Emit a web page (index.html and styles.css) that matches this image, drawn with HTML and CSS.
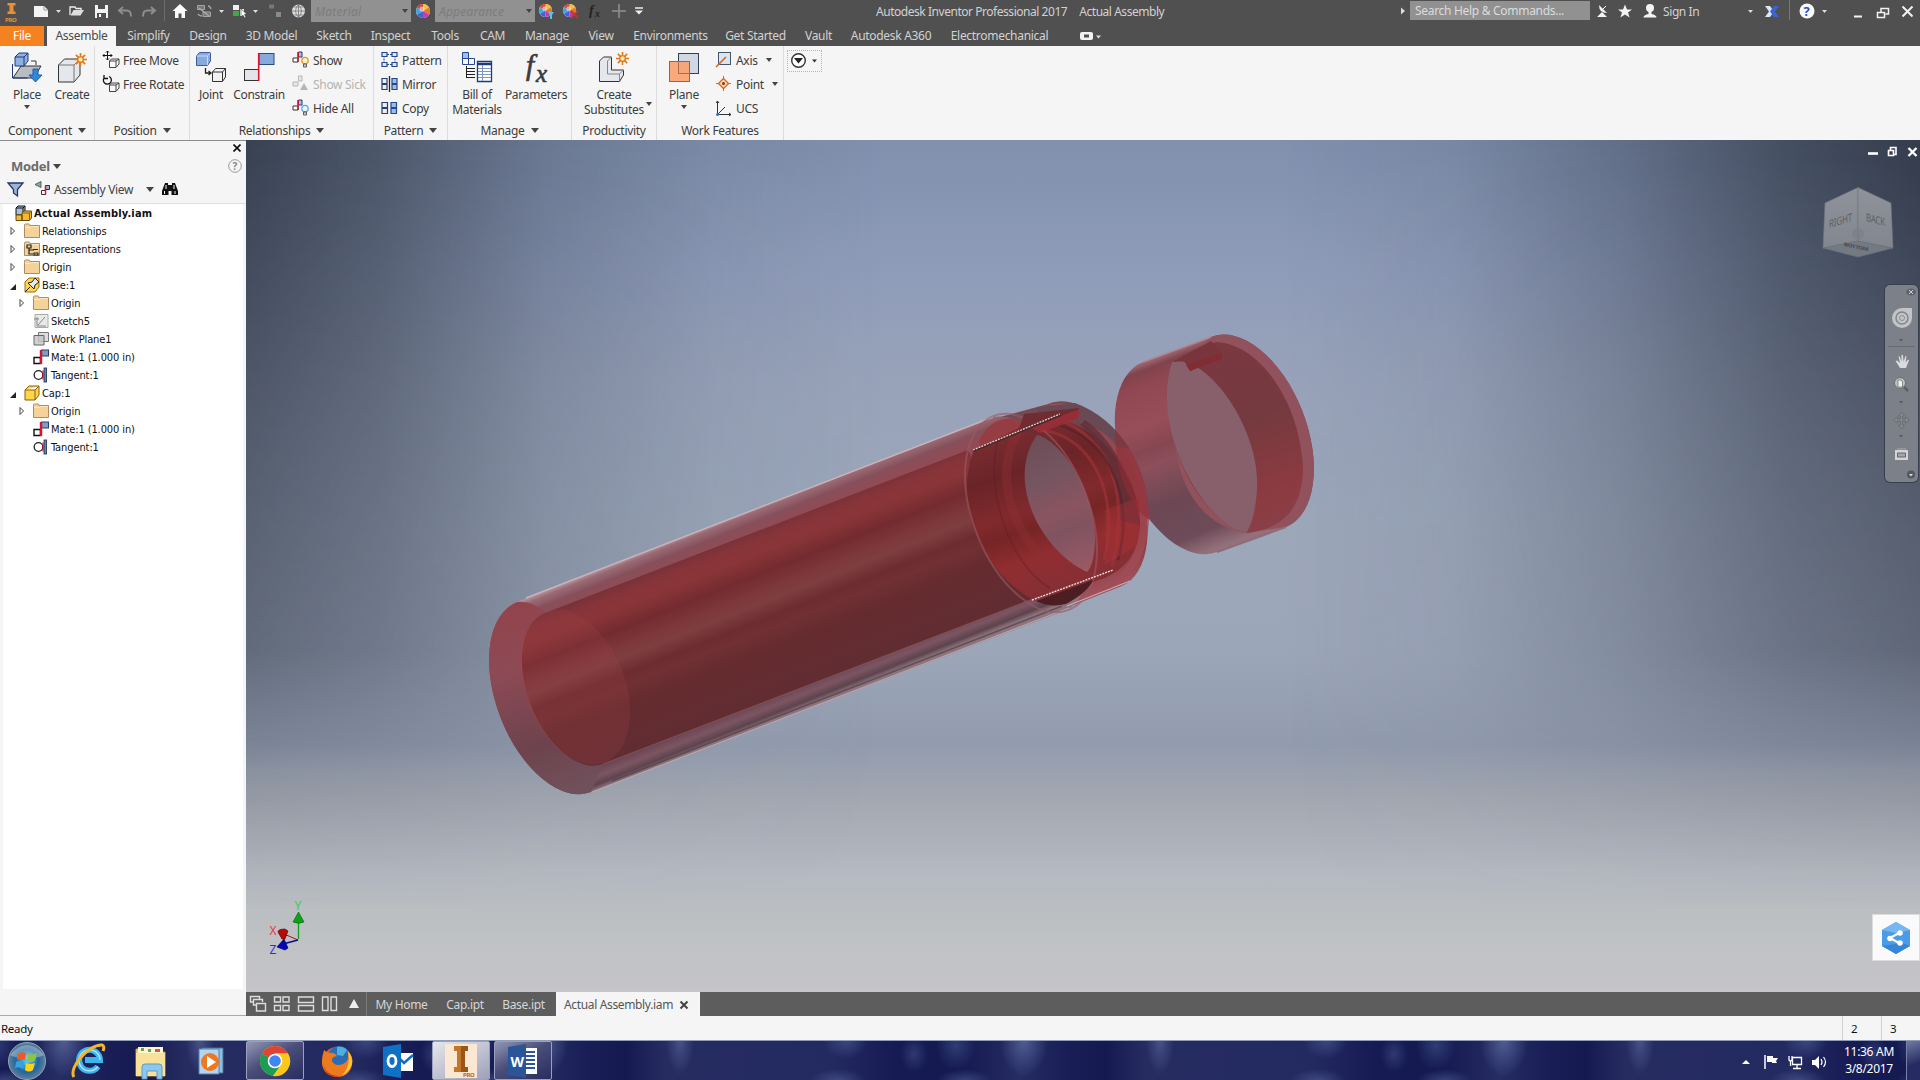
FILE: index.html
```html
<!DOCTYPE html>
<html lang="en">
<head>
    <meta charset="UTF-8">
    <title>Autodesk Inventor Professional 2017</title>
    <link rel="stylesheet" href="styles.css">
</head>
<body>

    <!-- shared icons -->
    <svg class="sprite" width="0" height="0">
        <symbol id="wheel" viewBox="0 0 16 16">
            <circle cx="8" cy="8" r="7" fill="#eee"/>
            <path d="M8 8V1a7 7 0 0 1 6 3.5z" fill="#f1c232"/><path d="M8 8l6-3.5a7 7 0 0 1 0 7z" fill="#e8772e"/>
            <path d="M8 8l6 3.500A7 7 0 0 1 8 15z" fill="#c63bb0"/><path d="M8 8v7a7 7 0 0 1-6-3.500z" fill="#4a5fd6"/>
            <path d="M8 8l-6 3.500a7 7 0 0 1 0-7z" fill="#39a9dc"/><path d="M8 8L2 4.500A7 7 0 0 1 8 1z" fill="#d9443a"/>
            <circle cx="7" cy="6" r="2.500" fill="#fff" opacity=".5"/>
        </symbol>
        <symbol id="folder" viewBox="0 0 16 16">
            <path d="M.5 3.500V2q0-1 1-1H5q1 0 1 1.500h9.500v12H.5z" fill="#f5d29a" stroke="#a98d66"/>
            <path d="M1 4.500h5.500l1-1H15" fill="none" stroke="#fbe8bd"/>
        </symbol>
        <symbol id="mate" viewBox="0 0 16 16">
            <rect x="8.500" y="1" width="7" height="6" fill="#7e9cc6" stroke="#27406b"/>
            <path d="M1 8.500h6.500v6H1z" fill="#fff" stroke="#111" stroke-width="1.400"/>
            <path d="M8 1v14" stroke="#d8132b" stroke-width="2.400"/>
        </symbol>
        <symbol id="tangent" viewBox="0 0 16 16">
            <circle cx="5.500" cy="8" r="4.300" fill="#fff" stroke="#222" stroke-width="1.300"/>
            <rect x="11" y="1" width="2.600" height="14" fill="#5d86b8" stroke="#1d2f4d" stroke-width=".8"/>
            <path d="M10 3.500v9" stroke="#d8132b" stroke-width="1.200"/>
        </symbol>
        <symbol id="closed" viewBox="0 0 6 10"><path d="M1 1.500L4.500 5 1 8.500z" fill="#fff" stroke="#444"/></symbol>
        <symbol id="open" viewBox="0 0 6 10"><path d="M6 4v6H0z" fill="#222"/></symbol>
        <symbol id="link" viewBox="0 0 16 16">
            <path d="M6.500 1H10v5H6.500z" fill="#aebfde" stroke="#223a73"/>
            <path d="M1 7h5v4H1z" fill="#fff" stroke="#333"/>
            <path d="M6 1v10" stroke="#d8132b" stroke-width="1.600"/>
        </symbol>
        <symbol id="star" viewBox="0 0 12 12">
            <path d="M6 0v12M0 6h12M1.700 1.700l8.600 8.600M10.300 1.700l-8.600 8.600" stroke="#e07a1e" stroke-width="1.500"/>
            <circle cx="6" cy="6" r="2.600" fill="#ffe9a0" stroke="#d86b13"/>
        </symbol>
    </svg>

    <div class="top">
        <div class="title-bar">
            <svg width="26" height="24" viewBox="0 0 26 24"><path d="M7.500 3h8v2.500h-2v6h2V14h-8v-2.500h2v-6h-2z" fill="#e69138"/><text x="5" y="21.500" font-size="6" fill="#e69138" font-weight="bold">PRO</text></svg>
            <svg width="40" height="24" viewBox="26 0 40 24"><path d="M34 6h10l4 4v7H34z" fill="#f4f4f4"/><path d="M44 6v4h4" stroke="#999" fill="none"/><path d="M56 10h5l-2.500 3z" fill="#ddd"/></svg>
            <svg width="98" height="24" viewBox="66 0 98 24">
                <path d="M70 15V7h5l1 1.500h5V10" fill="none" stroke="#eee" stroke-width="1.300"/><path d="M70.500 15.500l3-5.500H84l-3.500 5.500z" fill="#dcdcdc"/>
                <path d="M95 5h13v13H95z" fill="#f2f2f2"/><path d="M98 5h7v4h-7z" fill="#505050"/><path d="M97 13h9v5h-9z" fill="#505050"/><path d="M99 14h2v3h-2z" fill="#fff"/>
                <path d="M123 7l-4 3.500 4 3.500M119 10.500h8q4 0 4 6" fill="none" stroke="#8d8d8d" stroke-width="2"/>
                <path d="M151 7l4 3.500-4 3.500M155 10.500h-8q-4 0-4 6" fill="none" stroke="#8d8d8d" stroke-width="2"/>
            </svg>
            <svg width="66" height="24" viewBox="164 0 66 24">
                <path d="M164.500 0v21" stroke="#6c6c6c"/>
                <path d="M180 4l7.500 7H185v7h-3.500v-4.500h-3V18H175v-7h-2.500z" fill="#fafafa"/>
                <path d="M197.500 5.500h7v4h-7zM203 12h7.500v4.500H203z" fill="#777" stroke="#a5a5a5"/><path d="M198 14q1 2 4 2m6-10q2 0 3 3M199 8l10 8" fill="none" stroke="#aaa" stroke-width="1.500"/>
                <path d="M219 10h5l-2.500 3z" fill="#ddd"/>
            </svg>
            <svg width="80" height="24" viewBox="230 0 80 24">
                <path d="M233 5h6v5h-6zM240 9h4v7h-4z" fill="#eee"/><path d="M233 11h6v5h-6z" fill="#3faa45"/><path d="M241 9v8l2-2 1.500 3 1.500-.7-1.500-3h2.500z" fill="#fff" stroke="#222" stroke-width=".5"/>
                <path d="M253 10h5l-2.500 3z" fill="#ddd"/>
                <rect x="269" y="4.500" width="5" height="4" fill="#777"/><rect x="276" y="12" width="5" height="5" fill="#8a8a8a"/>
                <circle cx="298.500" cy="11" r="6.500" fill="#dedede"/><path d="M292 11h13M298.500 4.500v13M294 7h9M294 15h9M298.500 4.500q-6 6.500 0 13 6-6.500 0-13" stroke="#777" fill="none" stroke-width=".8"/>
            </svg>
            <div class="combo"><i>Material</i><span class="arr"></span></div>
            <svg class="wheel" width="16" height="16"><use href="#wheel"/></svg>
            <div class="combo"><i>Appearance</i><span class="arr"></span></div>
            <svg width="115" height="24" viewBox="535 0 115 24">
                <use href="#wheel" x="538" y="3" width="15" height="15"/><path d="M548 12h6l-2 3v4h-2v-4z" fill="#5dc4e8"/>
                <use href="#wheel" x="562" y="3" width="15" height="15"/><path d="M571 11l7 7m0-7l-7 7" stroke="#c0352e" stroke-width="2"/>
                <text x="589" y="15" font-size="14" font-style="italic" font-weight="bold" font-family="Liberation Serif" fill="#222">f</text><text x="595" y="17" font-size="10" font-style="italic" font-weight="bold" font-family="Liberation Serif" fill="#222">x</text>
                <path d="M612 11h14M619 4v14" stroke="#8e8e8e" stroke-width="1.600"/>
                <path d="M635 8h8" stroke="#eee" stroke-width="1.500"/><path d="M635 10.500h8l-4 4z" fill="#eee"/>
            </svg>
            <div class="app-title"><span>Autodesk Inventor Professional 2017</span><span>Actual Assembly</span></div>
            <svg width="10" height="24" viewBox="1400 0 10 24"><path d="M1401 7.500l4 3.500-4 3.500z" fill="#ddd"/></svg>
            <div class="search">Search Help &amp; Commands...</div>
            <svg width="73" height="24" viewBox="1590 0 73 24">
                <path d="M1599 5q0 8 8 8zM1597 17h10l-5-5z" fill="#f4f4f4"/><path d="M1602 10l4-4" stroke="#fff"/>
                <path d="M1625 4.500l2 5h5l-4 3 1.600 5-4.600-3-4.600 3 1.600-5-4-3h5z" fill="#f4f4f4"/>
                <circle cx="1650" cy="8" r="4" fill="#f4f4f4"/><path d="M1643.500 17.500q0-2.500 5-3.500v-3h3v3q5 1 5 3.500z" fill="#f4f4f4"/>
            </svg>
            <div class="sign-in">Sign In</div>
            <svg width="177" height="24" viewBox="1743 0 177 24">
                <path d="M1748 10h5l-2.500 3z" fill="#ddd"/>
                <path d="M1765 6h5l4 5.500-4 5.500h-5l4-5.500z" fill="#dbe6fb"/><path d="M1779 6h-5l-4 5.500 4 5.500h5l-4-5.500z" fill="#3f62d0"/>
                <path d="M1789.500 0v20" stroke="#777"/>
                <circle cx="1807" cy="11" r="7.500" fill="#f7f9ff"/><text x="1803.500" y="16" font-size="13" font-weight="bold" fill="#2b50b8">?</text>
                <path d="M1822 10h5l-2.500 3z" fill="#ddd"/>
                <path d="M1854 16.500h8" stroke="#f2f2f2" stroke-width="2"/>
                <path d="M1877.500 12.500h7v5h-7zM1881 12V8.500h7.500v5.500h-3" fill="none" stroke="#f2f2f2" stroke-width="1.500"/>
                <path d="M1902.500 6.500l10 10m0-10l-10 10" stroke="#f2f2f2" stroke-width="2"/>
            </svg>
        </div>
        <div class="tabs">
            <span class="file">File</span>
            <span class="active">Assemble</span>
            <span>Simplify</span>
            <span>Design</span>
            <span>3D Model</span>
            <span>Sketch</span>
            <span>Inspect</span>
            <span>Tools</span>
            <span>CAM</span>
            <span>Manage</span>
            <span>View</span>
            <span>Environments</span>
            <span>Get Started</span>
            <span>Vault</span>
            <span>Autodesk A360</span>
            <span>Electromechanical</span>
            <svg width="26" height="20"><rect x="1" y="6" width="13" height="8" rx="2" fill="#f2f2f2"/><rect x="5" y="8.500" width="5" height="3" fill="#505050"/><path d="M17 9.500h5l-2.500 3z" fill="#ddd"/></svg>
        </div>
    </div>

    <div class="ribbon">
        <div class="group component">
            <div class="tools">
                <div class="big">
                    <svg width="34" height="34" viewBox="10 51 34 34"><path d="M13 78l8-12h20l-7 12z" fill="#b9bdc2" stroke="#333"/><path d="M31 61h5v4" fill="none" stroke="#333"/><path d="M12.500 64v14h15" fill="none" stroke="#1f3a78"/><path d="M15 57l4-4h9v8l-4 5h-9z" fill="#8fb0e2" stroke="#1f3a78"/><path d="M15 57h9l4-4M24 57v9" fill="none" stroke="#1f3a78"/><path d="M33 69h5v6h4l-6.500 7-6.500-7h4z" fill="#2f88dc" stroke="#1d5ba8"/></svg>
                    <span>Place</span><b class="arr"></b>
                </div>
                <div class="big">
                    <svg width="34" height="34" viewBox="55 51 34 34"><path d="M58.500 65l6-6H80v16l-6 7H58.500z" fill="#e4e7eb" stroke="#333"/><path d="M58.500 65H74l6-6M74 65v17" fill="none" stroke="#777"/><use href="#star" x="74" y="53" width="13" height="13"/></svg>
                    <span>Create</span>
                </div>
            </div>
            <div class="label">Component<b class="arr"></b></div>
        </div>
        <div class="group position">
            <div class="tools">
                <div class="small">
                    <div><svg width="18" height="18"><path d="M5.500 0v9M1 4.500h9M4 1.500L5.500 0 7 1.500M4 7.500L5.500 9 7 7.500M2.500 3L1 4.500 2.500 6M8.500 3L10 4.500 8.500 6" fill="none" stroke="#111"/><path d="M7.500 10l2-2H17v5l-3 3.500H7.500zM7.500 10H14l3-2M14 10v6" fill="#f8f8f8" stroke="#444"/></svg>Free Move</div>
                    <div><svg width="18" height="18"><path d="M7 1.500A4 4 0 1 1 2 3M2 0v3.500h4" fill="none" stroke="#111" stroke-width="1.300"/><path d="M7.500 10l2-2H17v5l-3 3.500H7.500zM7.500 10H14l3-2M14 10v6" fill="#f8f8f8" stroke="#444"/></svg>Free Rotate</div>
                </div>
            </div>
            <div class="label">Position<b class="arr"></b></div>
        </div>
        <div class="group relationships">
            <div class="tools">
                <div class="big">
                    <svg width="34" height="34" viewBox="194 51 34 34"><path d="M196.500 56l3-3.500h11V61l-3 4.500h-11z" fill="#88a9de" stroke="#3c5c9c"/><path d="M196.500 56h11l3-3.500M207.500 56v9" fill="none" stroke="#c9d8f3"/><path d="M205.500 68v5h5m-2-2l2.500 2-2.500 2" fill="none" stroke="#222" stroke-width="1.300"/><path d="M212.500 72l3-3.500h10V77l-3 4.500h-10zM212.500 72h10l3-3.500M222.500 72v9" fill="#f2f2f2" stroke="#333"/></svg>
                    <span>Joint</span>
                </div>
                <div class="big">
                    <svg width="34" height="34" viewBox="242 51 34 34"><rect x="259" y="53.500" width="15" height="11" fill="#86a9de" stroke="#2a4a86"/><rect x="244.500" y="69.500" width="14" height="11" fill="#e3e5e8" stroke="#333"/><path d="M258.700 53v28" stroke="#e0142c" stroke-width="1.600"/></svg>
                    <span>Constrain</span>
                </div>
                <div class="small">
                    <div><svg width="18" height="18"><use href="#link" width="16" height="16"/><circle cx="13" cy="9.500" r="3.200" fill="#fff3c0" stroke="#e8932a" stroke-width="1.300"/><path d="M11.500 13h3v3h-3z" fill="#ccc" stroke="#444" stroke-width=".8"/></svg>Show</div>
                    <div class="off"><svg width="18" height="18"><path d="M6.500 1H10v5H6.500zM1 7h5v4H1z" fill="#e8e8e8" stroke="#b5b5b5"/><path d="M12 8l4 7H8z" fill="#b5b5b5"/></svg>Show Sick</div>
                    <div><svg width="18" height="18"><use href="#link" width="16" height="16"/><circle cx="13" cy="9.500" r="3.200" fill="#e9f5ff" stroke="#5aa9dd" stroke-width="1.300"/><path d="M11.500 13h3v3h-3z" fill="#ccc" stroke="#444" stroke-width=".8"/></svg>Hide All</div>
                </div>
            </div>
            <div class="label">Relationships<b class="arr"></b></div>
        </div>
        <div class="group pattern">
            <div class="tools">
                <div class="small">
                    <div><svg width="18" height="18"><path d="M3 3.500h11v10H3z" fill="none" stroke="#24488d" stroke-dasharray="2 1"/><path d="M1 1.500h5v4H1zM11 1.500h5v4h-5zM1 11.500h5v4H1zM11 11.500h5v4h-5z" fill="#dbe6f7" stroke="#24488d" stroke-width="1.200"/></svg>Pattern</div>
                    <div><svg width="18" height="18"><path d="M1 3.500h5v5H1zM1 9.500h5v5H1z" fill="#eee" stroke="#24406f" stroke-width="1.200"/><path d="M11 3.500h5v5h-5zM11 9.500h5v5h-5z" fill="#9dbde8" stroke="#24488d" stroke-width="1.200"/><path d="M8.500 1v16" stroke="#222" stroke-width="1.300"/></svg>Mirror</div>
                    <div><svg width="18" height="18"><path d="M1 3.500h5.500v5H1zM1 9.500h5.500v5H1z" fill="#eee" stroke="#24406f" stroke-width="1.200"/><path d="M10 3.500h5.500v5H10zM10 9.500h5.500v5H10z" fill="#9dbde8" stroke="#24488d" stroke-width="1.200"/></svg>Copy</div>
                </div>
            </div>
            <div class="label">Pattern<b class="arr"></b></div>
        </div>
        <div class="group manage">
            <div class="tools">
                <div class="big">
                    <svg width="34" height="34" viewBox="460 51 34 34"><path d="M462.500 52.500h6v6h-6z" fill="#9fc0ee" stroke="#24488d"/><path d="M462.500 58.500h6v6h-6zM468.500 58.500h6v6h-6z" fill="#f4f6fb" stroke="#24488d"/><path d="M467 68.500h8M467 71.500h8M467 74.500h8M467 77.500h8M466.500 66v12" stroke="#222"/><path d="M477.500 61.500h14v20h-14z" fill="#fff" stroke="#1f3a78" stroke-width="1.300"/><path d="M477 64h15" stroke="#1f3a78" stroke-width="2.500"/><path d="M478 68.500h13M478 71.500h13M478 74.500h13M478 77.500h13M482.500 65v16" stroke="#7d97c4"/></svg>
                    <span>Bill of<br>Materials</span>
                </div>
                <div class="big">
                    <svg class="fx" width="34" height="34" viewBox="520 51 34 34"><g font-family="Liberation Serif" font-style="italic" fill="#3c3c3c" stroke="#3c3c3c" stroke-width=".7"><text x="527" y="75" font-size="29">f</text><text x="537" y="82" font-size="25">x</text></g></svg>
                    <span>Parameters</span>
                </div>
            </div>
            <div class="label">Manage<b class="arr"></b></div>
        </div>
        <div class="group productivity">
            <div class="tools">
                <div class="big">
                    <svg width="34" height="34" viewBox="597 51 34 34"><path d="M599.500 61l4-4h8v13h12v5l-4 6.500h-20z" fill="#e4e7eb" stroke="#333"/><path d="M611.500 57l-4 4v13h12v7M619.500 74l4-4" fill="none" stroke="#888"/><use href="#star" x="616" y="52" width="13" height="13"/></svg>
                    <span>Create<br>Substitutes</span>
                </div>
                <b class="arr"></b>
            </div>
            <div class="label">Productivity</div>
        </div>
        <div class="group work">
            <div class="tools">
                <div class="big">
                    <svg width="34" height="34" viewBox="668 51 34 34"><rect x="679.500" y="53.500" width="20" height="20" fill="#cfd8e4" stroke="#333f55"/><rect x="670.500" y="61.500" width="20" height="20" fill="#f9a271" stroke="#c4561a" fill-opacity=".92"/><path d="M679.500 61.500v12h11" fill="none" stroke="#b06a4c"/></svg>
                    <span>Plane</span><b class="arr"></b>
                </div>
                <div class="small">
                    <div><svg width="18" height="18"><rect x="3.500" y="1.500" width="12" height="12" fill="#dbe4f0" stroke="#44536e"/><path d="M1 16L11 6" stroke="#d8661d" stroke-width="1.600"/></svg>Axis<b class="arr"></b></div>
                    <div><svg width="18" height="18"><path d="M8.500 1v15M1 8.500h15" stroke="#d8661d"/><path d="M8.500 3.500l5 5-5 5-5-5z" fill="#fdd9b5" stroke="#d8661d" stroke-width="1.300"/><circle cx="8.500" cy="8.500" r="1.500" fill="#7b3b12"/></svg>Point<b class="arr"></b></div>
                    <div><svg width="18" height="18"><path d="M2.500 2v13.500H16M2.500 15.500L10 8M1 4l1.500-2L4 4M14 14l2 1.500-2 1.500" fill="none" stroke="#333"/><circle cx="2.500" cy="15.500" r="1.500" fill="#3b74c4"/></svg>UCS</div>
                </div>
            </div>
            <div class="label">Work Features</div>
        </div>
        <div class="more"><svg width="34" height="21"><circle cx="10.500" cy="9.500" r="6.800" fill="#fff" stroke="#333" stroke-width="1.400"/><path d="M6 7h9l-4.500 5.500z" fill="#222"/><path d="M24 8.500h5l-2.500 3z" fill="#333"/></svg></div>
    </div>

    <div class="main">
        <div class="browser">
            <div class="browser-head">
                <svg class="close" width="8" height="8"><path d="M.5.500l7 7m0-7l-7 7" stroke="#111" stroke-width="1.700"/></svg>
                <div class="model">Model<b class="arr"></b><svg width="14" height="14"><circle cx="7" cy="7" r="6.300" fill="none" stroke="#999"/><text x="4.500" y="10.500" font-size="10" fill="#888">?</text></svg></div>
                <div class="view">
                    <svg width="54" height="18"><path d="M8 3h15l-5.500 6.500V16L13.500 13V9.500z" fill="#9db4da" stroke="#26395e" stroke-width="1.300"/><path d="M35 4.500l6-3v6z" fill="#8ab09a" stroke="#444" stroke-width=".8"/><path d="M45.500 5.500h4v4h-4z" fill="#99b3dd" stroke="#333"/><path d="M41.500 10.500h4v4h-4z" fill="#fff" stroke="#333"/><path d="M45.500 5.500v9" stroke="#d8132b" stroke-width="1.500"/></svg>
                    <span>Assembly View</span><b class="arr"></b>
                    <svg width="16" height="16"><path d="M3 2h3v2h4V2h3l3 8v4H9.500v-4h-3v4H0v-4z" fill="#111"/><path d="M4 4v4M12 4v4M2.500 10v3M13 10v3" stroke="#f5f5f5"/></svg>
                </div>
            </div>
            <div class="tree">
                <div class="row root"><svg width="17" height="16"><path d="M1 3l2-2h7v7L8 10H1z" fill="#a8c0de" stroke="#111"/><path d="M1 3h7l2-2M8 3v6" fill="none" stroke="#111"/><path d="M1 10h6v5.500H1zM7 8l2-2h7.500v7l-2 2.500H7z" fill="#f5b82e" stroke="#6b4a0a"/><path d="M7 8h7.500l2-2M14.500 8v7" stroke="#8a5c0c" fill="none"/></svg>Actual Assembly.iam</div>
                <div class="row"><svg class="exp" width="6" height="10"><use href="#closed"/></svg><svg width="16" height="16"><use href="#folder"/></svg>Relationships</div>
                <div class="row"><svg class="exp" width="6" height="10"><use href="#closed"/></svg><svg width="16" height="16"><use href="#folder"/><path d="M3 4h4v3H3zM5 7v6h4M5 9h5M9 8.500h5M10 12h4v2h-4z" fill="none" stroke="#222" stroke-width="1.200"/></svg>Representations</div>
                <div class="row"><svg class="exp" width="6" height="10"><use href="#closed"/></svg><svg width="16" height="16"><use href="#folder"/></svg>Origin</div>
                <div class="row"><svg class="exp" width="6" height="10"><use href="#open"/></svg><svg width="16" height="16"><path d="M1 5l4-4h10v9l-4 5H1z" fill="#ffd64a" stroke="#9c6f0b"/><path d="M1 15l5-5M4 6l6 6 1-4 4-3-4-4-3 4z" fill="#e8ecf2" stroke="#222"/></svg>Base:1</div>
                <div class="row sub"><svg class="exp" width="6" height="10"><use href="#closed"/></svg><svg width="16" height="16"><use href="#folder"/></svg>Origin</div>
                <div class="row sub"><svg width="16" height="16"><path d="M2 1.500h13v13H2z" fill="#e9e9e9" stroke="#aaa"/><path d="M4 4v9h9M5 12l7-8M1 6h5" fill="none" stroke="#888"/></svg>Sketch5</div>
                <div class="row sub"><svg width="16" height="16"><path d="M5.500 1.500h10v9h-10z" fill="#ddd" stroke="#777"/><path d="M1 4.500h10v9.500H1z" fill="#c4c4c4" stroke="#666" fill-opacity=".8"/></svg>Work Plane1</div>
                <div class="row sub"><svg width="16" height="16"><use href="#mate"/></svg>Mate:1 (1.000 in)</div>
                <div class="row sub"><svg width="16" height="16"><use href="#tangent"/></svg>Tangent:1</div>
                <div class="row"><svg class="exp" width="6" height="10"><use href="#open"/></svg><svg width="16" height="16"><path d="M1 5l4-4h10v9l-4 5H1zM1 5h10l4-4M11 5v10" fill="#ffd64a" stroke="#8a5f0b"/></svg>Cap:1</div>
                <div class="row sub"><svg class="exp" width="6" height="10"><use href="#closed"/></svg><svg width="16" height="16"><use href="#folder"/></svg>Origin</div>
                <div class="row sub"><svg width="16" height="16"><use href="#mate"/></svg>Mate:1 (1.000 in)</div>
                <div class="row sub"><svg width="16" height="16"><use href="#tangent"/></svg>Tangent:1</div>
            </div>
        </div>

        <div class="work-area">
            <div class="viewport">
                <svg class="scene" width="1674" height="852" viewBox="246 140 1674 852">
                    <defs>
                        <linearGradient id="outer" gradientUnits="userSpaceOnUse" x1="516" y1="602" x2="592" y2="792">
                            <stop offset="0" stop-color="#b79ba4"/><stop offset=".025" stop-color="#9a6b75"/><stop offset=".07" stop-color="#86505b"/><stop offset=".15" stop-color="#984852"/><stop offset=".5" stop-color="#80454f"/><stop offset=".88" stop-color="#64404c"/><stop offset=".94" stop-color="#7c5562"/><stop offset=".975" stop-color="#5d434d"/><stop offset="1" stop-color="#8c747d"/>
                        </linearGradient>
                        <linearGradient id="bore" gradientUnits="userSpaceOnUse" x1="544" y1="614" x2="603" y2="764">
                            <stop offset="0" stop-color="#773238"/><stop offset=".06" stop-color="#87343a"/><stop offset=".14" stop-color="#8a3538"/><stop offset=".26" stop-color="#732b2f"/><stop offset=".36" stop-color="#7d383b"/><stop offset=".43" stop-color="#7e3d40"/><stop offset=".53" stop-color="#6d2c30"/><stop offset=".6" stop-color="#703034"/><stop offset=".72" stop-color="#652b2f"/><stop offset="1" stop-color="#612d32"/>
                        </linearGradient>
                        <linearGradient id="ring" gradientUnits="userSpaceOnUse" x1="500" y1="600" x2="560" y2="792">
                            <stop offset="0" stop-color="#93434c"/><stop offset=".35" stop-color="#8d4a55"/><stop offset=".75" stop-color="#6d434d"/><stop offset="1" stop-color="#70505b"/>
                        </linearGradient>
                        <linearGradient id="neck" gradientUnits="userSpaceOnUse" x1="1000" y1="415" x2="1065" y2="600">
                            <stop offset="0" stop-color="#92444a"/><stop offset=".1" stop-color="#7a2c31"/><stop offset=".3" stop-color="#6a2427"/><stop offset=".5" stop-color="#812a2d"/><stop offset=".6" stop-color="#762526"/><stop offset=".75" stop-color="#912d30"/><stop offset="1" stop-color="#803036"/>
                        </linearGradient>
                        <linearGradient id="neckOut" gradientUnits="userSpaceOnUse" x1="1060" y1="402" x2="1130" y2="585">
                            <stop offset="0" stop-color="#744b55"/><stop offset=".25" stop-color="#65404a"/><stop offset=".45" stop-color="#75353a"/><stop offset=".6" stop-color="#9b3d42"/><stop offset=".75" stop-color="#852d31"/><stop offset="1" stop-color="#a35560"/>
                        </linearGradient>
                        <linearGradient id="hole" gradientUnits="userSpaceOnUse" x1="1030" y1="440" x2="1085" y2="570">
                            <stop offset="0" stop-color="#6d4e58"/><stop offset=".3" stop-color="#755560"/><stop offset=".55" stop-color="#8a5460"/><stop offset=".7" stop-color="#805361"/><stop offset="1" stop-color="#9a5965"/>
                        </linearGradient>
                        <linearGradient id="cap" gradientUnits="userSpaceOnUse" x1="1135" y1="365" x2="1207" y2="552">
                            <stop offset="0" stop-color="#a06c77"/><stop offset=".04" stop-color="#81434d"/><stop offset=".12" stop-color="#914852"/><stop offset=".3" stop-color="#984e58"/><stop offset=".42" stop-color="#864751"/><stop offset=".5" stop-color="#8c4f5b"/><stop offset=".7" stop-color="#6c4854"/><stop offset=".9" stop-color="#6d4b58"/><stop offset="1" stop-color="#94707b"/>
                        </linearGradient>
                        <linearGradient id="capIn" gradientUnits="userSpaceOnUse" x1="1215" y1="345" x2="1275" y2="530">
                            <stop offset="0" stop-color="#7b383f"/><stop offset=".4" stop-color="#743a3f"/><stop offset=".65" stop-color="#833a40"/><stop offset=".8" stop-color="#8c3b40"/><stop offset="1" stop-color="#8a3f47"/>
                        </linearGradient>
                        <linearGradient id="cube" x1="0" y1="0" x2="0" y2="1"><stop offset="0" stop-color="#8f929a"/><stop offset="1" stop-color="#82868e"/></linearGradient>
                    </defs>

                    <!-- cap -->
                    <path d="M1143 362L1211 337A50 28.300 68.700 0 1 1286 527L1217 552A50 28.300 68.700 0 1 1143 362z" fill="url(#cap)"/>
                    <path d="M1211 337A50 28.300 68.700 0 1 1286 527L1246 533C1160 520 1155 380 1211 337z" fill="#91525d"/>
                    <path d="M1172 362C1185 355 1200 345 1217 342C1262 345 1300 405 1303 467C1303 505 1286 529 1246 533C1200 520 1155 440 1172 362z" fill="url(#capIn)"/>
                    <path d="M1172 362C1204 352 1260 425 1257 489C1256 508 1252 525 1246 533C1204 525 1150 430 1172 362z" fill="#87606b"/>
                    <path d="M1173 362L1211 341L1222 352L1191 371L1184 361z" fill="#78353b"/><path d="M1186 365L1222 353V359L1190 371z" fill="#822c33"/>
                    <path d="M1143 362L1211 337" stroke="#ac8b96" stroke-width="1.500"/><path d="M1217 552L1286 527" stroke="#916c78" stroke-width="2"/>

                    <!-- neck -->
                    <path d="M1000 417L1048 404A98 55 68.700 0 1 1122 586L1069 607A104 58 68.700 0 1 1000 417z" fill="url(#neckOut)"/>

                    <!-- body -->
                    <path d="M517 602L993 417A104 58 68.700 0 1 1069 609L591 792A50 28.100 68.700 0 1 517 602z" fill="url(#outer)"/>
                    <path d="M517 602A50 28.100 68.700 0 0 591 792L603 764L560 690L545 612Q530 600 517 602z" fill="url(#ring)"/>
                    <path d="M545 613L968 450L1038 597L603 764A50 28.600 68.700 0 1 545 613z" fill="url(#bore)"/>
                    <ellipse cx="575" cy="687" rx="81" ry="50" transform="rotate(68.700 575 687)" fill="#a5484c" opacity=".2"/>
                    <path d="M526 598L993 417" stroke="#c8b3bb" stroke-width="1.500"/>
                    <path d="M592 792L1069 608" stroke="#b9a4ab" stroke-width="1.200"/>
                    <path d="M612 781L1062 606" stroke="#51404a" stroke-width="1.500" opacity=".7"/>
                    <path d="M603 764L1038 597" stroke="#8f5858" opacity=".7"/>

                    <!-- collar -->
                    <path d="M973 452L1008 428L1045 415C1100 425 1140 470 1140 525C1138 555 1125 568 1105 578L1035 601C995 580 950 520 973 452z" fill="url(#neck)"/>
                    <path d="M1048 404C1105 396 1150 460 1149 520C1147 560 1130 582 1100 592C1128 572 1140 550 1140 520C1138 475 1100 425 1048 404z" fill="#a14c57" opacity=".75"/>
                    <path d="M1036 408L1075 403Q1108 415 1130 449L1118 447Q1095 417 1040 415z" fill="#684954"/>
                    <path d="M1085 420C1115 440 1135 485 1140 525L1120 520C1118 480 1105 445 1080 425z" fill="#613039" opacity=".8"/>
                    <path d="M1040 430C1095 435 1120 500 1104 560M1060 420C1110 440 1130 490 1112 566" fill="none" stroke="#a13337" stroke-width="3" opacity=".6"/>
                    <path d="M1056 424C1112 440 1134 500 1118 560" fill="none" stroke="#54242a" stroke-width="2.500" opacity=".7"/>
                    <path d="M1105 510L1140 497L1138 545L1105 565z" fill="#a93236" opacity=".4"/>
                    <path d="M1020 430C990 470 1010 550 1080 585" fill="none" stroke="#8f3035" stroke-width="9" opacity=".4"/>
                    <path d="M998 440C984 490 1010 565 1050 588" fill="none" stroke="#551e22" stroke-width="1.500" opacity=".35"/>
                    <path d="M1037 435C1060 440 1096 490 1095 543C1094 557 1092 567 1087 572C1040 550 1005 480 1037 435z" fill="url(#hole)"/>
                    <path d="M979 441Q990 418 1010 419Q1024 420 1026 424L980 448z" fill="#953d43"/>
                    <ellipse cx="1031" cy="513" rx="104" ry="58" transform="rotate(68.700 1031 513)" fill="none" stroke="#985a64" stroke-width="2" opacity=".6"/>
                    <path d="M1024 414L1079 408L1078 418L1035 433L1018 432z" fill="#702c33"/><path d="M1030 427L1080 409V418L1040 433z" fill="#a52f37" opacity=".7"/>
                    <path d="M1036 601L1093 580Q1088 592 1066 604Q1050 608 1036 601z" fill="#4c1d22"/>
                    <path d="M973 451L1061 415" stroke="#452a2d" stroke-width="2"/><path d="M973 450L1060 414" stroke="#e8cdc8" stroke-width="1.300" stroke-dasharray="2 1"/>
                    <path d="M1032 600L1113 570" stroke="#f1dcd8" stroke-width="1.400" stroke-dasharray="2 1"/><path d="M1067 606L1130 581" stroke="#c8abb0" stroke-width="1.300"/>
                    <path d="M1115 430C1115 470 1127 505 1149 520C1149 485 1138 455 1115 430z" fill="#8d2d36" opacity=".6"/>

                    <!-- view cube -->
                    <g stroke="#6f737c" stroke-width=".6">
                        <path d="M1825 203L1858 187.500V241L1823 248z" fill="url(#cube)"/>
                        <path d="M1891 203L1858 187.500V241L1893 248z" fill="url(#cube)"/>
                        <path d="M1823 248L1858 241L1893 248L1858 257z" fill="#747982"/>
                    </g>
                    <circle cx="1858" cy="234" r="6" fill="#787b83" opacity=".5"/>
                    <text transform="translate(1829 228) skewY(-17)" font-size="11" textLength="23" lengthAdjust="spacingAndGlyphs" fill="#5c6069">RIGHT</text>
                    <text transform="translate(1866 221) skewY(15)" font-size="11" textLength="19" lengthAdjust="spacingAndGlyphs" fill="#5c6069">BACK</text>
                    <text transform="translate(1844 246) skewY(12)" font-size="5" font-weight="bold" textLength="24" lengthAdjust="spacingAndGlyphs" fill="#464b55">BOTTOM</text>

                    <!-- document window buttons -->
                    <path d="M1868 153.500h10" stroke="#fff" stroke-width="2.600"/>
                    <path d="M1888.500 150.500h5v5h-5zM1890.500 150v-2.500h5.500v7h-2" fill="none" stroke="#fff" stroke-width="1.600"/>
                    <path d="M1908.500 148l8 8m0-8l-8 8" stroke="#fff" stroke-width="2.400"/>

                    <!-- origin axes -->
                    <path d="M298.500 939V920" stroke="#159a1d" stroke-width="1.300"/><path d="M298.500 912l5.500 10q-5.500 2.500-11 0z" fill="#0ba315" stroke="#0b5d10" stroke-width=".6"/>
                    <path d="M298 940l-14-6" stroke="#9a1a12"/><path d="M278 932q0-3 7-3l3 2-3 8h-3z" fill="#b90808" stroke="#400" stroke-width=".6"/>
                    <path d="M298 940l-15 4" stroke="#0d0d8a" stroke-width="1.300"/><path d="M277 947l7-8 4 9-3 2z" fill="#0505b8" stroke="#003" stroke-width=".6"/>
                    <text x="294.500" y="910" font-size="12" fill="#36d34a">Y</text><text x="269.500" y="935" font-size="12" fill="#e53a3a">X</text><text x="269.500" y="954" font-size="12" fill="#2b2bf0">Z</text>
                </svg>

                <div class="nav-bar">
                    <svg width="33" height="197" viewBox="1885 285 33 197">
                        <ellipse cx="1911" cy="292" rx="5" ry="3.500" fill="#5f646c"/><path d="M1909 290l4 4m0-4l-4 4" stroke="#c9ccd2"/>
                        <path d="M1902 308h10v10a10 10 0 1 1-10-10z" fill="#c2c4c8"/><circle cx="1902" cy="318" r="6" fill="none" stroke="#82858b" stroke-width="1.500"/><circle cx="1902" cy="318" r="2.500" fill="none" stroke="#8c8f94"/>
                        <path d="M1888 346.500h27" stroke="#666a72"/>
                        <path d="M1900 368q-3-5-4.500-7l1.500-.5 3 2.500-1.500-6.500h1.300l1.700 5v-6.500h1.500l.5 6.500 2-5.500 1 .3-1 6.200 2.500-3 1 .7-3 7.800z" fill="#d8dadd"/>
                        <circle cx="1900" cy="383" r="5.500" fill="#bfc2c6" stroke="#6a6d74"/><path d="M1898 380h3l1.500 2v5h-4.500z" fill="#f1f1f1" stroke="#666" stroke-width=".7"/><path d="M1904 387l4 4" stroke="#5d6066" stroke-width="2.500"/>
                        <path d="M1901.500 412l3 4h-2v3h3v-2l4 3-4 3v-2h-3v4h2l-3 4-3-4h2v-4h-3v2l-4-3 4-3v2h3v-3h-2z" fill="#85888f" stroke="#60646c" stroke-width=".7"/>
                        <path d="M1899 339h4l-2 2.500zM1899 401h4l-2 2.500zM1899 435h4l-2 2.500z" fill="#555961"/>
                        <path d="M1895 450h13v10h-13z" fill="#d2d4d7"/><path d="M1897.500 453h8v4h-8z" fill="#a2a5aa" stroke="#666"/><path d="M1897 449h9" stroke="#aaa"/>
                        <circle cx="1911" cy="474.500" r="4" fill="#54585f"/><path d="M1909 474h4l-2 2.500z" fill="#ddd"/>
                    </svg>
                </div>
                <div class="share">
                    <svg width="30" height="34" viewBox="0 0 30 34"><path d="M15 1l14 8v16l-14 8-14-8V9z" fill="#4a9be8"/><path d="M15 1l14 8-14 3L1 9z" fill="#74b7f2"/><path d="M15 33l14-8-8-3-20 3z" fill="#3785d6"/><path d="M18 12L9 17l9 5" fill="none" stroke="#fff" stroke-width="2.200"/><circle cx="19" cy="12" r="2.800" fill="#fff"/><circle cx="9" cy="17.500" r="2.800" fill="#fff"/><circle cx="19" cy="22" r="2.800" fill="#fff"/></svg>
                </div>
            </div>
            <div class="doc-tabs">
                <svg width="120" height="23"><g fill="none" stroke="#ddd" stroke-width="1.400"><path d="M7 10H4.500V4.500h9V7M10 13H7.500V7.500h9V10M10.500 11.500h9V19h-9z"/><path d="M28.500 5h6v5h-6zM37 5h6v5h-6zM28.500 13.500h6v5h-6zM37 13.500h6v5h-6z"/><path d="M52.500 5h15v5.500h-15zM52.500 13.500h15V19h-15z"/><path d="M76.500 5h5.500v13.500h-5.500zM85 5h5.500v13.500H85z"/></g><path d="M103 16h10l-5-9z" fill="#eee"/></svg>
                <div class="docs">
                    <span>My Home</span>
                    <span>Cap.ipt</span>
                    <span>Base.ipt</span>
                    <span class="current">Actual Assembly.iam<svg width="10" height="10"><path d="M1.500 1.500l7 7m0-7l-7 7" stroke="#444" stroke-width="2"/></svg></span>
                </div>
            </div>
        </div>
    </div>

    <div class="status">
        <span>Ready</span>
        <div class="counts"><span>2</span><span>3</span></div>
    </div>

    <div class="taskbar">
        <div class="launch">
            <svg width="58" height="40" viewBox="0 0 58 40"><defs><radialGradient id="orb"><stop offset="0" stop-color="#5fd0f5"/><stop offset=".6" stop-color="#21659d"/><stop offset="1" stop-color="#5f7f9b"/></radialGradient></defs><circle cx="27" cy="20" r="18.500" fill="url(#orb)" stroke="#8fa6b8"/><path d="M10 14q17-20 34 0-17 8-34 0z" fill="#fff" opacity=".3"/><path d="M18 13q4-3 8-1l-1 7q-4-2-8 0z" fill="#ef5a24"/><path d="M28 13q4 2 9-1l-2 8q-4 2-8 0z" fill="#8cc63f"/><path d="M16 21q4-2 8 0l-1 7q-4-3-8-1z" fill="#36a2e4"/><path d="M26 22q4 2 9 0l-2 7q-4 3-8 0z" fill="#fcd116"/></svg>
        </div>
        <div class="launch">
            <svg width="36" height="38" viewBox="0 0 36 38"><path d="M27 24.500A10.500 10.500 0 1 1 29 18H14" fill="none" stroke="#3fb5ee" stroke-width="6"/><path d="M27 24.500A10.500 10.500 0 1 1 29 18" fill="none" stroke="#a8e3fb" stroke-width="1.500"/><path d="M3 35C-3 26 18 2 31 3q3 1 1 6" fill="none" stroke="#f4b62a" stroke-width="3"/></svg>
        </div>
        <div class="launch">
            <svg width="36" height="38" viewBox="0 0 36 38"><path d="M3 7h9l2 3h18v24H3z" fill="#f2d378" stroke="#c39d42"/><path d="M5 5h25v8H5z" fill="#fff6cf"/><path d="M8 6h3v3H8zM15 7h3v3h-3z" fill="#62a84c"/><path d="M22 7h5v3h-5z" fill="#d9534f"/><path d="M3 11h29v23H3z" fill="#f8e29b"/><path d="M9 37V25q0-3 3-3h14q3 0 3 3v12h-5v-8H14v8z" fill="#8cc8ec" stroke="#5a9ac4"/></svg>
        </div>
        <div class="launch">
            <svg width="36" height="38" viewBox="0 0 36 38"><path d="M9 6h21v25H9z" fill="#8fbfe4" stroke="#456f97"/><path d="M6 7h20v25H6z" fill="#b5d5ee" stroke="#567fa6"/><circle cx="17" cy="20" r="9" fill="#ee7722"/><path d="M14 14v12l9-6z" fill="#fff"/></svg>
        </div>
        <div class="launch running">
            <svg width="34" height="34" viewBox="0 0 34 34"><circle cx="17" cy="17" r="15" fill="#fbc116"/><path d="M17 17L4 9.500A15 15 0 0 1 30 9.500H17z" fill="#db4437"/><path d="M17 17L4 9.500A15 15 0 0 0 15 32l8.500-11z" fill="#1d9c57"/><path d="M17 9.500h13A15 15 0 0 1 15 32l8.500-12z" fill="#fdc81c"/><circle cx="17" cy="17" r="7.300" fill="#fff"/><circle cx="17" cy="17" r="5.800" fill="#4284f3"/></svg>
        </div>
        <div class="launch">
            <svg width="34" height="36" viewBox="0 0 34 36"><circle cx="17" cy="19" r="15" fill="#e3611c"/><circle cx="19" cy="14" r="11" fill="#2b6cb5"/><path d="M17 4q6-1 10 3l-4 6-6-1z" fill="#4fb0dc"/><path d="M4 7q3 3 5 3 5-1 8 3-6 1-5 5 3 6 11 3 8-4 4-14 7 6 5 15-3 12-15 12Q3 33 2 19q0-6 2-12z" fill="#ee7a1e"/><path d="M28 8q5 6 4 13-3 9-10 11 9-8 6-24z" fill="#fcc436"/><path d="M3 20q3 14 18 13Q6 37 3 20z" fill="#c62f1c"/></svg>
        </div>
        <div class="launch">
            <svg width="34" height="36" viewBox="0 0 34 36"><path d="M17 10h14v18H17z" fill="#fff"/><path d="M17 15l5 5 9-8" fill="none" stroke="#0f6fc6" stroke-width="2.500"/><path d="M1 4l18-3v34L1 32z" fill="#0f70c4"/><ellipse cx="10" cy="18" rx="4" ry="5.500" fill="none" stroke="#fff" stroke-width="2.800"/></svg>
        </div>
        <div class="launch running lit">
            <svg width="34" height="38" viewBox="0 0 34 38"><path d="M1 2h32v34H1z" fill="#fbe8d2"/><path d="M10 4h14v5h-3v16h3v5H10v-5h3V9h-3z" fill="#c2762b"/><path d="M17 4h7v5h-3v16h3v5h-7z" fill="#9b5417"/><text x="19" y="35" font-size="6" font-weight="bold" fill="#b5641c">PRO</text></svg>
        </div>
        <div class="launch running">
            <svg width="34" height="36" viewBox="0 0 34 36"><path d="M18 5h13v26H18z" fill="#fff"/><path d="M20 9h9M20 13h9M20 17h9M20 21h9M20 25h9" stroke="#2a5699" stroke-width="1.800"/><path d="M2 4l18-3v34L2 32z" fill="#2a5699"/><text x="4.500" y="23.500" font-size="14" font-weight="bold" fill="#fff">W</text></svg>
        </div>
        <div class="tray">
            <svg width="94" height="40" viewBox="1738 1040 94 40">
                <path d="M1742 1063h8l-4-4z" fill="#fff"/>
                <path d="M1765 1054v14" stroke="#fff" stroke-width="1.500"/><path d="M1767 1055h6v2h5l-2 3 1 2h-5v-1h-5z" fill="#fff"/>
                <path d="M1792.500 1056.500h9v7h-9zM1797 1064v3M1793 1067.500h8M1789 1055v4q1.500 2 3 0v-4M1790.500 1060v5" fill="none" stroke="#fff" stroke-width="1.300"/>
                <path d="M1812 1059h3l4-4v13l-4-4h-3z" fill="#fff"/><path d="M1821 1058q2 3 0 6M1823.500 1056q4 5 0 10" fill="none" stroke="#fff" stroke-width="1.200"/>
            </svg>
            <div class="clock">11:36 AM<br>3/8/2017</div>
            <div class="peek"></div>
        </div>
    </div>

</body>
</html>
```
FILE: styles.css
```css
* {
    box-sizing: border-box;
}
body {
    margin: 0;
    width: 1920px;
    height: 1080px;
    overflow: hidden;
    display: flex;
    flex-direction: column;
    background: #f5f5f5;
    font-family: "Noto Sans", "Open Sans", sans-serif;
    font-size: 12px;
    letter-spacing: -0.3px;
    line-height: 15px;
    color: #3c3c3c;
}
svg {
    display: block;
    flex: none;
}
.sprite {
    position: absolute;
}
.arr {
    display: inline-block;
    flex: none;
    width: 0;
    height: 0;
    border: 3px solid transparent;
    border-top: 4px solid #444;
    border-bottom: 0;
}

/* title bar and tabs */
.top {
    height: 46px;
    background: #505050;
    color: #d2d2d2;
}
.title-bar {
    display: flex;
    height: 26px;
}
.combo {
    width: 100px;
    height: 22px;
    padding: 0 3px 0 4px;
    display: flex;
    align-items: center;
    justify-content: space-between;
    background: #919191;
    color: #7c7c7c;
    font-size: 12px;
    letter-spacing: 0.2px;
}
.combo:first-of-type {
    margin-left: 1px;
}
.wheel {
    margin: 3px 4px 0;
}
.app-title {
    width: 750px;
    padding-left: 226px;
    display: flex;
    gap: 12px;
    line-height: 24px;
    letter-spacing: -0.46px;
    white-space: nowrap;
}
.search {
    width: 180px;
    height: 19px;
    margin-top: 1px;
    padding-left: 5px;
    background: #919191;
    color: #dcdcdc;
    line-height: 20px;
}
.sign-in {
    width: 80px;
    line-height: 23px;
    letter-spacing: -0.4px;
}
.tabs {
    display: grid;
    height: 20px;
    grid-template-columns: 44px 75px 59px 60px 67px 58px 55px 54px 41px 68px 40px 99px 71px 55px 90px 127px 26px;
    line-height: 20px;
    text-align: center;
    white-space: nowrap;
}
.tabs .file {
    background: #f58220;
    color: #fff;
}
.tabs .active {
    margin: 0 3px;
    background: #f5f5f5;
    color: #4a4a4a;
}
.tabs svg {
    margin-left: 16px;
}

/* ribbon */
.ribbon {
    display: flex;
    height: 94px;
    background: #f5f5f5;
}
.group {
    display: flex;
    flex-direction: column;
    border-right: 1px solid #dcdcdc;
    white-space: nowrap;
}
.component { width: 95px; }
.position { width: 95px; }
.relationships { width: 184px; }
.pattern { width: 74px; }
.manage { width: 124px; }
.productivity { width: 85px; }
.work { width: 127px; }
.tools {
    height: 75px;
    display: flex;
    padding-top: 3px;
}
.big {
    display: flex;
    flex-direction: column;
    align-items: center;
    text-align: center;
    padding-top: 2px;
}
.big span {
    margin-top: 2px;
}
.big .arr {
    margin-top: 3px;
}
.fx {
    overflow: visible;
}
.component .big:nth-child(1) { width: 54px; }
.component .big:nth-child(2) { width: 36px; }
.relationships .big:nth-child(1) { width: 42px; }
.relationships .big:nth-child(2) { width: 54px; }
.manage .big:nth-child(1) { width: 58px; }
.manage .big:nth-child(2) { width: 60px; }
.productivity .big { width: 74px; margin-left: 5px; }
.productivity .tools .arr {
    margin-top: 53px;
    margin-left: -5px;
}
.work .big { width: 54px; }
.small {
    margin-top: -1px;
}
.small div {
    display: flex;
    align-items: center;
    gap: 3px;
    height: 24px;
}
.small .arr {
    margin-left: 5px;
}
.position .small { padding-left: 7px; }
.relationships .small { padding-left: 6px; }
.pattern .small { padding-left: 7px; }
.work .small { padding-left: 4px; }
.off {
    color: #b4b4b4;
}
.label {
    display: flex;
    align-items: center;
    justify-content: center;
    height: 18px;
}
.label .arr {
    border-width: 4px 4px 0;
    border-top-width: 5px;
    margin-left: 6px;
}
.more {
    width: 35px;
    height: 22px;
    margin: 4px 0 0 3px;
    border: 1px dotted #b5b5b5;
}

/* browser panel */
.main {
    display: flex;
    height: 876px;
}
.browser {
    width: 246px;
    padding: 0 3px;
    border-top: 1px solid #8b8b8b;
    border-bottom: 1px solid #aaa;
    background: #f5f5f5;
    color: #222;
}
.browser-head {
    height: 63px;
    margin: 0 -3px;
    padding-top: 3px;
    border-bottom: 1px solid #dcdcdc;
}
.close {
    margin: 0 5px 0 auto;
}
.model {
    display: flex;
    align-items: center;
    height: 28px;
    padding: 0 4px 0 11px;
    font-size: 13px;
    font-weight: bold;
    color: #6c6c6c;
}
.model .arr {
    border-width: 5px 4px 0;
    margin-left: 3px;
}
.model svg {
    margin-left: auto;
}
.view {
    display: flex;
    align-items: center;
    height: 18px;
    color: #444;
}
.view span {
    width: 92px;
}
.view .arr {
    border-width: 5px 4px 0;
    margin-right: 8px;
}
.tree {
    height: 785px;
    background: #fff;
    font-family: "DejaVu Sans Condensed", "DejaVu Sans", sans-serif;
    font-size: 11px;
    letter-spacing: -0.1px;
    color: #111;
}
.row {
    display: flex;
    align-items: center;
    gap: 2px;
    height: 18px;
    padding-left: 21px;
    white-space: nowrap;
}
.row.root {
    padding-left: 12px;
    font-weight: bold;
    letter-spacing: 0.15px;
}
.row.sub {
    padding-left: 30px;
}
.exp {
    margin-left: -14px;
    margin-right: 6px;
}

/* viewport */
.work-area {
    width: 1674px;
}
.viewport {
    position: relative;
    height: 852px;
    background: linear-gradient(#8090ad 0%, #8f9cb9 15%, #98a3ba 28%, #9ca7ba 45%, #9ca6b9 60%, #929cae 71%, #a2a7b1 77%, #b5b9c1 86%, #bdc0c2 92%, #c6c5c9 100%);
}
.viewport::before {
    content: "";
    position: absolute;
    inset: 0;
    background: linear-gradient(90deg, rgba(46, 54, 68, .88) 0%, rgba(50, 58, 73, .68) 8%, rgba(60, 70, 90, .33) 18%, rgba(70, 80, 100, .1) 28%, transparent 38%, transparent 62%, rgba(65, 75, 98, .12) 72%, rgba(56, 65, 85, .42) 82%, rgba(48, 56, 72, .75) 92%, rgba(44, 51, 65, .9) 100%);
    -webkit-mask-image: linear-gradient(#000 0%, rgba(0, 0, 0, .75) 35%, rgba(0, 0, 0, .6) 60%, rgba(0, 0, 0, .17) 74%, transparent 90%);
    mask-image: linear-gradient(#000 0%, rgba(0, 0, 0, .75) 35%, rgba(0, 0, 0, .6) 60%, rgba(0, 0, 0, .17) 74%, transparent 90%);
}
.scene {
    position: absolute;
    inset: 0;
}
.nav-bar {
    position: absolute;
    top: 145px;
    right: 2px;
    border-radius: 5px;
    background: #7c8088;
    box-shadow: 0 0 0 1px #383f4c;
}
.share {
    position: absolute;
    right: 0;
    top: 774px;
    width: 48px;
    height: 47px;
    display: flex;
    align-items: center;
    justify-content: center;
    background: #fafafa;
    border: 1px solid #ddd;
}
.doc-tabs {
    display: flex;
    height: 24px;
    background: #5d5d5d;
    color: #d6d6d6;
}
.docs {
    display: grid;
    grid-template-columns: 69px 58px 62px 144px;
    border-left: 1px solid #7b7b7b;
    line-height: 25px;
    text-align: center;
    white-space: nowrap;
}
.docs span:nth-child(3) {
    padding-right: 3px;
}
.docs .current {
    display: flex;
    align-items: center;
    gap: 6px;
    padding-left: 8px;
    background: #f5f5f5;
    color: #555;
    letter-spacing: -0.35px;
}

/* status bar */
.status {
    display: flex;
    justify-content: space-between;
    height: 24px;
    background: #f5f5f5;
    color: #111;
    font-size: 11.5px;
    line-height: 25px;
}
.status > span {
    padding-left: 1px;
}
.counts {
    display: flex;
}
.counts span {
    width: 39px;
    padding-left: 8px;
    border-left: 1px solid #d0d0d0;
}

/* taskbar */
.taskbar {
    display: flex;
    height: 40px;
    border-top: 1px solid #8f9dbd;
    background:
        radial-gradient(ellipse 14px 34px at 16px 0, rgba(120, 140, 195, .4), transparent),
        radial-gradient(ellipse 22px 18px at 182px 0, rgba(110, 130, 190, .35), transparent),
        radial-gradient(ellipse 14px 18px at 250px 13px, rgba(110, 125, 185, .3), transparent),
        radial-gradient(ellipse 20px 26px at 292px 4px, rgba(100, 125, 185, .35), transparent),
        radial-gradient(ellipse 24px 36px at 360px 0, rgba(130, 150, 205, .45), transparent),
        radial-gradient(ellipse 28px 12px at 174px 40px, rgba(110, 125, 180, .4), transparent),
        radial-gradient(ellipse 28px 12px at 300px 40px, rgba(110, 130, 185, .4), transparent),
        linear-gradient(90deg, #262c60 0, #232a60 35%, #161b53 48%, #141950 62%, #262d63 74%, #191e56 84%, #141950 92%, #262c60 100%);
    background-size: 480px 40px;
    background-position: 184px 0;
}
.launch {
    width: 62px;
    display: flex;
    align-items: center;
    justify-content: center;
}
.launch:nth-child(1) { width: 58px; }
.launch:nth-child(4) { width: 57px; margin-right: 7px; }
.launch:nth-child(6) { margin-left: 2px; }
.launch:nth-child(7) { margin-right: 2px; }
.running {
    width: 58px;
    margin-right: 4px;
    border: 1px solid #9aa0bd;
    border-radius: 2px;
    background: linear-gradient(150deg, #9498b5, #4a4e79 45%, #282d60);
}
.launch.running:nth-child(5) {
    margin-right: 0;
}
.lit {
    background: linear-gradient(150deg, #e6e6ec, #9ea0ba);
}
.tray {
    display: flex;
    margin-left: auto;
    color: #fff;
}
.clock {
    width: 74px;
    padding-top: 2px;
    line-height: 17px;
    text-align: center;
}
.peek {
    width: 14px;
    border-left: 1px solid #7580a8;
    background: linear-gradient(160deg, #7279a2, #262c63 60%);
}
```
